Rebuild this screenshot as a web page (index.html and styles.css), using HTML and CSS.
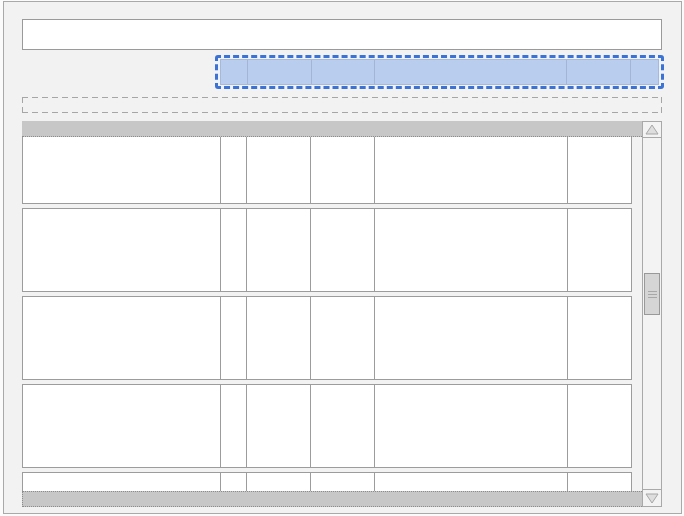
FILE: index.html
```html
<!DOCTYPE html>
<html>
<head>
<meta charset="utf-8">
<link rel="stylesheet" href="styles.css">
</head>
<body>
<div class="frame">
  <div class="input"></div>
  <div class="drag-bar">
    <div class="drag-cells">
      <div class="dc w27"></div>
      <div class="dc w64"></div>
      <div class="dc w64"></div>
      <div class="dc w193"></div>
      <div class="dc w64"></div>
      <div class="dc w27 last"></div>
    </div>
  </div>
  <div class="drop-zone"></div>
  <div class="table">
    <div class="pane">
      <div class="rows">
        <div class="row first"><div class="c"></div><div class="c"></div><div class="c"></div><div class="c"></div><div class="c"></div><div class="c end"></div></div>
        <div class="row"><div class="c"></div><div class="c"></div><div class="c"></div><div class="c"></div><div class="c"></div><div class="c end"></div></div>
        <div class="row"><div class="c"></div><div class="c"></div><div class="c"></div><div class="c"></div><div class="c"></div><div class="c end"></div></div>
        <div class="row"><div class="c"></div><div class="c"></div><div class="c"></div><div class="c"></div><div class="c"></div><div class="c end"></div></div>
        <div class="row"><div class="c"></div><div class="c"></div><div class="c"></div><div class="c"></div><div class="c"></div><div class="c end"></div></div>
      </div>
      <div class="hatch top"></div>
      <div class="hatch bottom"></div>
    </div>
    <div class="scrollbar">
      <div class="sb-btn up">
        <svg width="14" height="11" viewBox="0 0 14 11"><polygon points="7,1 13,10 1,10" fill="#dedede" stroke="#a6a6a6" stroke-width="1"/></svg>
      </div>
      <div class="sb-track">
        <div class="thumb">
          <span class="grip"></span><span class="grip"></span><span class="grip"></span>
        </div>
      </div>
      <div class="sb-btn down">
        <svg width="14" height="11" viewBox="0 0 14 11"><polygon points="1,1 13,1 7,10" fill="#dedede" stroke="#a6a6a6" stroke-width="1"/></svg>
      </div>
    </div>
  </div>
</div>
</body>
</html>
```
FILE: styles.css
```css
* { box-sizing: border-box; }
html, body { margin: 0; padding: 0; background: #fbfbfb; }
body { font-family: "Liberation Sans", Arial, sans-serif; }

.frame {
  margin: 1px 0 0 3px;
  width: 679px;
  height: 513px;
  background: #f2f2f2;
  border: 1px solid #a9a9a9;
  padding: 17px 18px 0 18px;
  display: flex;
  flex-direction: column;
}

.input {
  height: 31px;
  width: 640px;
  background: #fff;
  border: 1px solid #9a9a9a;
}

.drag-bar {
  align-self: flex-end;
  margin-right: -1px;
  margin-top: 5px;
  width: 449px;
  height: 34px;
  border: 3px dashed #3b72d4;
  border-radius: 3px;
  padding: 1px 2px;
  background: #eef2fa;
}
.drag-cells {
  display: flex;
  height: 100%;
  background: #b9cdef;
  border: 1px solid #a7b8d9;
}
.dc { border-right: 1px solid #a3b5d6; height: 100%; }
.dc.last { border-right: none; }
.w27 { width: 27px; }
.w64 { width: 64px; }
.w193 { width: 193px; }

.drop-zone {
  margin-top: 8px;
  width: 640px;
  height: 16px;
  background:
    repeating-linear-gradient(90deg, #a6a6a6 0 6px, transparent 6px 10px) left top / 100% 1px no-repeat,
    repeating-linear-gradient(90deg, #a6a6a6 0 6px, transparent 6px 10px) left bottom / 100% 1px no-repeat,
    repeating-linear-gradient(180deg, #a6a6a6 0 6px, transparent 6px 10px) left top / 1px 100% no-repeat,
    repeating-linear-gradient(180deg, #a6a6a6 0 6px, transparent 6px 10px) right top / 1px 100% no-repeat;
}

.table {
  margin-top: 8px;
  width: 640px;
  height: 386px;
  display: flex;
}

.pane {
  position: relative;
  width: 620px;
  height: 100%;
  overflow: hidden;
}
.rows {
  display: flex;
  flex-direction: column;
  gap: 4px;
}
.row {
  width: 610px;
  height: 84px;
  flex: none;
  background: #fff;
  border: 1px solid #9c9c9c;
  display: grid;
  grid-template-columns: 198px 26px 64px 64px 193px 1fr;
}
.row.first { height: 83px; }
.c { border-right: 1px solid #9c9c9c; }
.c.end { border-right: none; }

.hatch {
  position: absolute;
  left: 0;
  width: 620px;
  height: 16px;
  background: #c7c7c7;
}
.hatch.top { top: 0; border-bottom: 1px dotted #8c8c8c; }
.hatch.bottom { bottom: 0; border: 1px dotted #8c8c8c; border-right: none; }

.scrollbar {
  width: 20px;
  height: 100%;
  border: 1px solid #a9a9a9;
  background: #f3f3f3;
  display: flex;
  flex-direction: column;
}
.sb-btn {
  height: 16px;
  flex: none;
  display: flex;
  align-items: center;
  justify-content: center;
}
.sb-btn.up { border-bottom: 1px solid #a9a9a9; }
.sb-btn.down { border-top: 1px solid #a9a9a9; height: 17px; }
.sb-track {
  flex: 1;
  padding-top: 135px;
  padding-left: 1px;
}
.thumb {
  width: 16px;
  height: 42px;
  background: #d5d5d5;
  border: 1px solid #999;
  display: flex;
  flex-direction: column;
  align-items: center;
  justify-content: center;
  gap: 2px;
}
.grip {
  display: block;
  width: 9px;
  height: 1px;
  background: #a8a8a8;
}
```
